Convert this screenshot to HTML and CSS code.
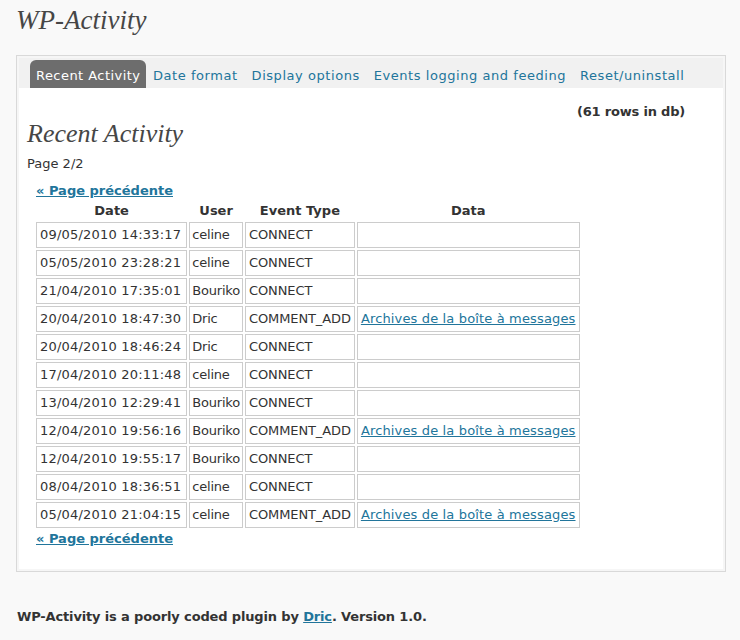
FILE: index.html
```html
<!DOCTYPE html>
<html>
<head>
<meta charset="utf-8">
<link rel="stylesheet" href="styles.css">
</head>
<body>
<div class="wrap">
  <h1 class="title">WP-Activity</h1>
  <div class="box">
    <div class="panel">
      <ul class="tabs">
        <li class="tab active">Recent Activity</li>
        <li class="tab"><a href="#">Date format</a></li>
        <li class="tab"><a href="#">Display options</a></li>
        <li class="tab"><a href="#">Events logging and feeding</a></li>
        <li class="tab"><a href="#">Reset/uninstall</a></li>
      </ul>
      <div class="content">
        <div class="count">(61 rows in db)</div>
        <h2 class="section">Recent Activity</h2>
        <div class="page">Page 2/2</div>
        <div class="listing">
          <a class="pager" href="#">« Page précédente</a>
          <table class="log">
            <thead>
              <tr><th>Date</th><th>User</th><th>Event Type</th><th>Data</th></tr>
            </thead>
            <tbody>
              <tr><td>09/05/2010 14:33:17</td><td>celine</td><td>CONNECT</td><td></td></tr>
              <tr><td>05/05/2010 23:28:21</td><td>celine</td><td>CONNECT</td><td></td></tr>
              <tr><td>21/04/2010 17:35:01</td><td>Bouriko</td><td>CONNECT</td><td></td></tr>
              <tr><td>20/04/2010 18:47:30</td><td>Dric</td><td>COMMENT_ADD</td><td><a href="#">Archives de la boîte à messages</a></td></tr>
              <tr><td>20/04/2010 18:46:24</td><td>Dric</td><td>CONNECT</td><td></td></tr>
              <tr><td>17/04/2010 20:11:48</td><td>celine</td><td>CONNECT</td><td></td></tr>
              <tr><td>13/04/2010 12:29:41</td><td>Bouriko</td><td>CONNECT</td><td></td></tr>
              <tr><td>12/04/2010 19:56:16</td><td>Bouriko</td><td>COMMENT_ADD</td><td><a href="#">Archives de la boîte à messages</a></td></tr>
              <tr><td>12/04/2010 19:55:17</td><td>Bouriko</td><td>CONNECT</td><td></td></tr>
              <tr><td>08/04/2010 18:36:51</td><td>celine</td><td>CONNECT</td><td></td></tr>
              <tr><td>05/04/2010 21:04:15</td><td>celine</td><td>COMMENT_ADD</td><td><a href="#">Archives de la boîte à messages</a></td></tr>
            </tbody>
          </table>
          <a class="pager pager-bottom" href="#">« Page précédente</a>
        </div>
      </div>
    </div>
  </div>
  <p class="footer">WP-Activity is a poorly coded plugin by <a href="#">Dric</a>. Version 1.0.</p>
</div>
</body>
</html>
```
FILE: styles.css
```css
html, body {
  margin: 0;
  padding: 0;
  background: #f9f9f9;
}
body {
  font-family: "DejaVu Sans", Verdana, sans-serif;
  font-size: 13px;
  color: #333;
}
a {
  color: #21759b;
}
.wrap {
  padding: 0 15px 0 16px;
}
.title {
  margin: 0;
  padding-top: 4px;
  height: 55px;
  box-sizing: border-box;
  font-family: "Liberation Serif", serif;
  font-style: italic;
  font-weight: normal;
  font-size: 27px;
  line-height: 32px;
  color: #464646;
}
.box {
  width: 710px;
  box-sizing: border-box;
  border: 1px solid #d9d9d9;
  padding: 2px;
  background: #f6f6f6;
}
.panel {
  background: #fff;
  padding-bottom: 22px;
}
.tabs {
  list-style: none;
  margin: 0;
  padding: 2px 0 0 11px;
  height: 30px;
  box-sizing: border-box;
  background: #f1f1f1;
  display: flex;
  align-items: flex-end;
}
.tab {
  height: 28px;
  line-height: 31px;
  padding: 0 6px;
  border-radius: 6px 6px 0 0;
  white-space: nowrap;
  letter-spacing: 0.45px;
}
.tab + .tab {
  padding: 0 7px;
  letter-spacing: 0.55px;
}
.tab.active + .tab {
  padding-left: 6.5px;
}
.tab a {
  text-decoration: none;
}
.tab.active {
  background: #6d6d6d;
  color: #fff;
}
.content {
  padding: 0 0 0 8px;
}
.count {
  text-align: right;
  font-weight: bold;
  letter-spacing: -0.2px;
  padding-right: 38px;
  padding-top: 16px;
  line-height: 16px;
}
.section {
  margin: 0;
  font-family: "Liberation Serif", serif;
  font-style: italic;
  font-weight: normal;
  font-size: 26px;
  line-height: 27px;
  color: #464646;
}
.page {
  margin-top: 9px;
  line-height: 16px;
}
.listing {
  margin-top: 11px;
  padding-left: 9px;
}
.pager {
  display: block;
  width: max-content;
  font-weight: bold;
  line-height: 16px;
}
.pager-bottom {
  margin-top: 1px;
}
.log {
  border-collapse: separate;
  border-spacing: 2px;
  margin-left: -2px;
}
.log th {
  font-weight: bold;
  line-height: 19px;
  padding: 0 3px;
  text-align: center;
}
.log td {
  border: 1px solid #cccccc;
  height: 24px;
  line-height: 24px;
  padding: 0 3px;
  white-space: nowrap;
}
.log td:nth-child(1) {
  letter-spacing: 0.2px;
  padding-right: 5px;
}
.log td:nth-child(2) {
  letter-spacing: -0.2px;
  padding: 0 2px;
}
.log td:nth-child(3) {
  letter-spacing: -0.1px;
}
.log td:nth-child(4) {
  min-width: 212px;
  letter-spacing: 0.15px;
}
.footer {
  margin: 37px 0 0 1px;
  font-weight: bold;
  letter-spacing: -0.15px;
  line-height: 16px;
}
```
